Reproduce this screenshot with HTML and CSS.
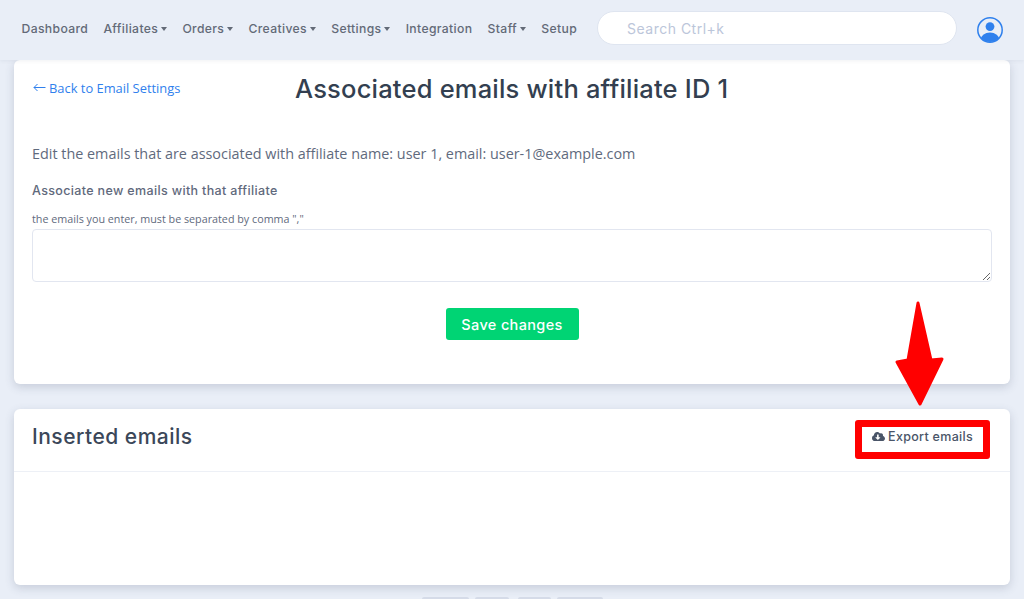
FILE: index.html
```html
<!DOCTYPE html>
<html lang="en">
<head>
<meta charset="utf-8">
<title>Associated emails</title>
<link rel="stylesheet" href="styles.css">
</head>
<body>
<header class="topbar">
  <nav class="nav">
    <a class="nav-link">Dashboard</a>
    <a class="nav-link caret">Affiliates</a>
    <a class="nav-link caret">Orders</a>
    <a class="nav-link caret">Creatives</a>
    <a class="nav-link caret">Settings</a>
    <a class="nav-link">Integration</a>
    <a class="nav-link caret">Staff</a>
    <a class="nav-link">Setup</a>
  </nav>
  <div class="search"><span class="search-text">Search Ctrl+k</span></div>
  <svg class="avatar" viewBox="0 0 26 26" width="26" height="26">
    <defs><clipPath id="disc"><circle cx="13" cy="13" r="12"/></clipPath></defs>
    <circle cx="13" cy="9.6" r="4.4" fill="#2f80ed"/>
    <ellipse cx="13" cy="23" rx="9.5" ry="7.5" fill="#2f80ed" clip-path="url(#disc)"/>
    <circle cx="13" cy="13" r="12.2" fill="none" stroke="#2f80ed" stroke-width="1.5"/>
  </svg>
</header>
<main class="content">
  <section class="card card-form">
    <div class="title-row">
      <a class="back">
        <svg class="back-arrow" viewBox="0 0 13 9" width="13" height="9"><path d="M12.5 4.5H1M4.5 1 1 4.5 4.5 8" fill="none" stroke="#2f80ed" stroke-width="1"/></svg>
        Back to Email Settings
      </a>
      <h1 class="title">Associated emails with affiliate ID 1</h1>
    </div>
    <p class="lead">Edit the emails that are associated with affiliate name: user 1, email: user-1@example.com</p>
    <label class="label">Associate new emails with that affiliate</label>
    <p class="hint">the emails you enter, must be separated by comma ","</p>
    <textarea class="area"></textarea>
    <div class="actions"><button class="save">Save changes</button></div>
  </section>
  <section class="card card-list">
    <div class="list-head">
      <h2 class="list-title">Inserted emails</h2>
      <button class="export">
        <svg class="cloud" viewBox="0 0 640 512" width="13" height="11"><path fill="#4a5568" d="M537.6 226.6c4.1-10.7 6.4-22.4 6.4-34.6 0-53-43-96-96-96-19.7 0-38.1 6-53.3 16.2C367 64.2 315.3 32 256 32c-88.4 0-160 71.6-160 160 0 2.7.1 5.4.2 8.1C40.2 219.8 0 273.2 0 336c0 79.5 64.5 144 144 144h368c70.7 0 128-57.3 128-128 0-61.9-44-113.6-102.4-125.4zm-132.9 88.7L299.3 420.7c-6.2 6.2-16.4 6.2-22.6 0L171.3 315.3c-10.1-10.1-2.9-27.3 11.3-27.3H248V176c0-8.8 7.2-16 16-16h48c8.8 0 16 7.2 16 16v112h65.4c14.2 0 21.4 17.2 11.3 27.3z"/></svg>
        Export emails
      </button>
    </div>
  </section>
  <div class="pager">
    <span class="page p1"></span><span class="page p2"></span><span class="page p3"></span><span class="page p4"></span>
  </div>
</main>
<div class="highlight"></div>
<svg class="arrow" viewBox="0 0 52 108" width="52" height="108">
  <path d="M25 3 L15 60 L4 62 L27 104 L49 59 L38 60 Z" fill="#ff0000" stroke="#ff0000" stroke-width="3" stroke-linejoin="round"/>
</svg>
</body>
</html>
```
FILE: styles.css
```css
* { box-sizing: border-box; }
html, body { height: 599px; overflow: hidden; }
body {
  margin: 0;
  background: #e9eef7;
  font-family: "Open Sans", "Noto Sans", sans-serif;
  color: #4a5568;
  position: relative;
}
.topbar {
  position: relative;
  z-index: 1;
  height: 60px;
  display: flex;
  align-items: center;
  padding: 0 21px 4px;
  background: #e9eef7;
  box-shadow: 0 1px 4px rgba(60, 72, 100, .08);
}
.nav { display: flex; gap: 15.2px; width: 577px; flex: none; padding-left: .5px; }
.nav-link {
  font-family: Inter, sans-serif;
  font-size: 12.2px;
  font-weight: 500;
  letter-spacing: .35px;
  color: #636a77;
  white-space: nowrap;
}
.caret::after {
  content: "";
  display: inline-block;
  margin-left: 3px;
  vertical-align: 2px;
  border-top: 4px solid #636a77;
  border-left: 3.5px solid transparent;
  border-right: 3.5px solid transparent;
}
.search {
  margin-left: -1px;
  width: 360px;
  height: 34px;
  flex: none;
  background: #fff;
  border: 1px solid #dfe5f0;
  border-radius: 17px;
  padding-left: 29px;
  display: flex;
  align-items: center;
}
.search-text { font-family: Inter, sans-serif; font-size: 14px; letter-spacing: .5px; color: #bcc6da; }
.avatar { margin: 4px 0 0 20px; flex: none; }
.content { display: flex; flex-direction: column; padding: 0 14px; }
.card {
  background: #fff;
  border-radius: 6px;
  box-shadow: 0 3px 10px rgba(60, 72, 100, .2);
}
.card-form { height: 324px; padding: 0 18px; }
.title-row { display: flex; align-items: center; height: 56px; }
.back {
  display: flex;
  align-items: center;
  gap: 3px;
  margin-top: -1px;
  font-size: 12.9px;
  color: #2f80ed;
  width: 263px;
  flex: none;
  padding-left: 1px;
}
.back-arrow { flex: none; }
.title {
  margin: 0;
  font-family: Inter, sans-serif;
  font-size: 25.5px;
  font-weight: 500;
  letter-spacing: .2px;
  color: #333f50;
  white-space: nowrap;
}
.lead { margin: 28px 0 0; font-size: 14.38px; line-height: 20px; color: #5f6a7d; }
.label {
  display: block;
  margin-top: 18px;
  font-family: Inter, sans-serif;
  font-size: 12.5px;
  font-weight: 500;
  letter-spacing: .35px;
  line-height: 18px;
  color: #5f697c;
}
.hint { margin: 12px 0 0; font-size: 10.75px; line-height: 14px; color: #5f6a7d; }
.area {
  display: block;
  width: 100%;
  height: 53px;
  margin-top: 3px;
  background: #fff;
  border: 1px solid #e2e6f0;
  border-radius: 4px;
  outline: 0;
}
.actions { display: flex; justify-content: center; margin-top: 26px; }
.save {
  width: 133px;
  height: 32px;
  padding: 0;
  border: 0;
  border-radius: 3px;
  background: #00d474;
  color: #fff;
  font-family: Inter, sans-serif;
  font-size: 14.5px;
  font-weight: 500;
  letter-spacing: .35px;
}
.card-list { margin-top: 25px; height: 176px; }
.list-head {
  height: 63px;
  display: flex;
  align-items: center;
  justify-content: space-between;
  padding: 0 37px 8px 18px;
  border-bottom: 1px solid #edf0f6;
}
.list-title {
  margin: 0;
  font-family: Inter, sans-serif;
  font-size: 21px;
  font-weight: 500;
  letter-spacing: .5px;
  color: #3b4759;
}
.export {
  display: flex;
  align-items: center;
  gap: 3px;
  padding: 0;
  border: 0;
  background: none;
  color: #4a5568;
  font-family: Inter, sans-serif;
  font-size: 12.5px;
  font-weight: 500;
  letter-spacing: .3px;
  white-space: nowrap;
}
.pager { display: flex; justify-content: center; margin-top: 12px; }
.page { height: 3px; background: #d5dbe8; border-radius: 2px 2px 0 0; }
.p1 { width: 47px; }
.p2 { width: 34px; margin-left: 6px; }
.p3 { width: 33px; margin-left: 9px; }
.p4 { width: 46px; margin-left: 6px; }
.highlight {
  position: absolute;
  left: 855px;
  top: 420px;
  width: 135px;
  height: 39px;
  border: 7px solid #ff0000;
  border-radius: 3px;
}
.arrow { position: absolute; left: 893px; top: 300px; }
```
